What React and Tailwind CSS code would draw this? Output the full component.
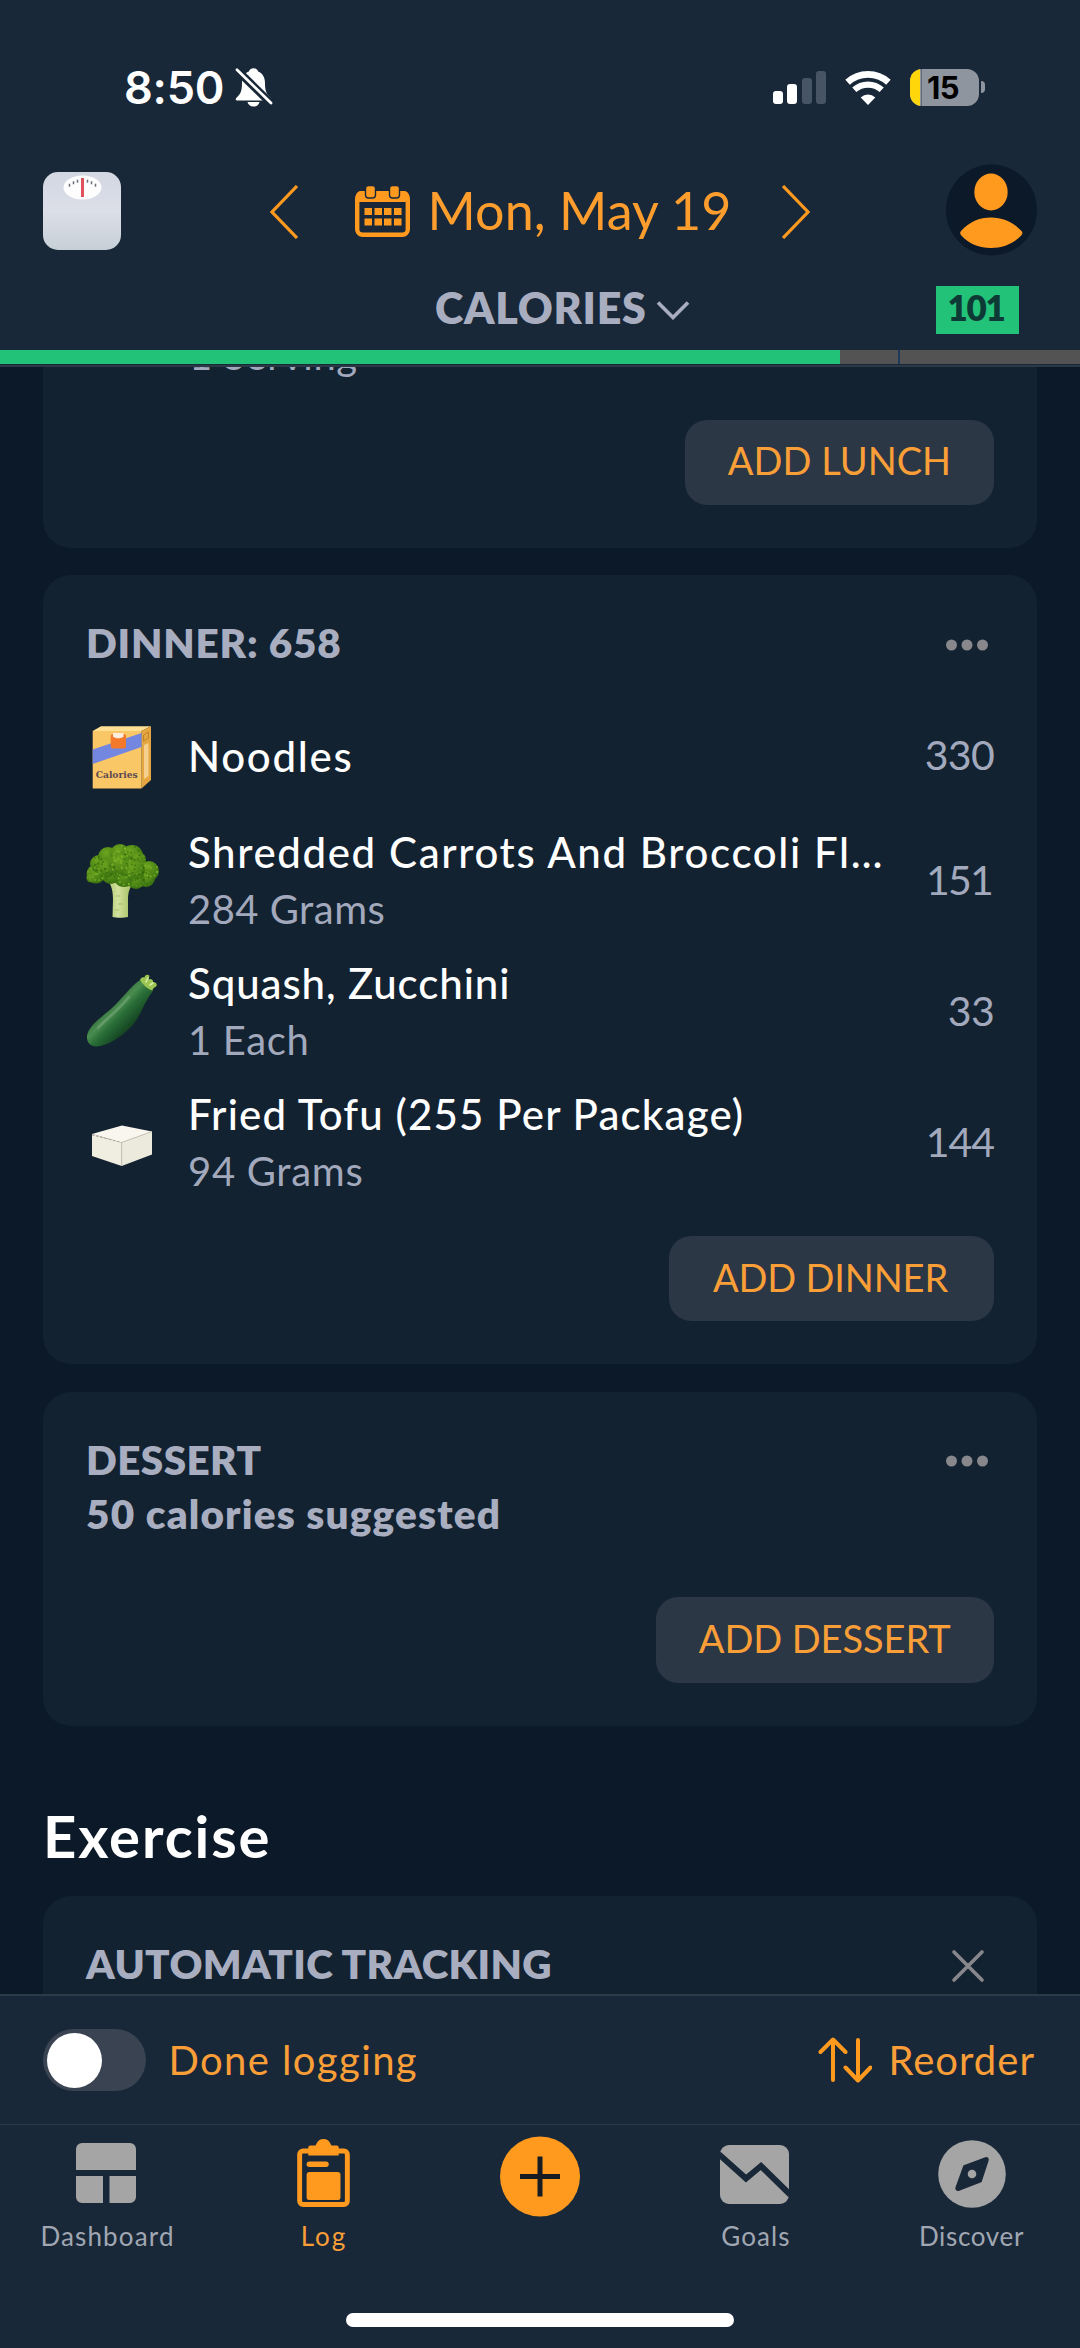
const ORANGE = '#ff9a1f';

function BellOff() {
  return (
    <svg className="ml-[11px] h-[40px] w-[38px]" viewBox="0 0 38 40" fill="#fff">
      <path d="M18.5 1.2c-2.4 0-4.2 1.4-4.6 3.2C9.200 6.200 7 10.500 7 16c0 8-1.600 11.200-5 14.200-2.200 2-1.400 3.300.8 3.300h31.400c2.200 0 3-1.300.8-3.300-3.400-3-5-6.200-5-14.200 0-5.500-2.200-9.800-6.900-11.600-.4-1.800-2.200-3.200-4.600-3.200z" />
      <path d="M12.500 35h12c-.5 2.700-2.900 4.600-6 4.600s-5.500-1.900-6-4.600z" />
      <path d="M2.500 3.500 36.500 37" stroke="#192838" strokeWidth="8" />
      <path d="M2 2.800 36 36" stroke="#fff" strokeWidth="2.800" strokeLinecap="round" />
    </svg>
  );
}

function StatusBar() {
  return (
    <div className="mt-[59px] flex h-[56px] items-center pl-[124px] pr-[95px]">
      <span className="mt-[2px] font-[Inter] text-[45px] font-semibold leading-[56px] tracking-[-0.200px] text-white">8:50</span>
      <BellOff />
      <div className="ml-auto flex items-center">
        <div className="flex h-[33px] items-end gap-[4.500px]">
          <div className="h-[13px] w-[10px] rounded-[3px] bg-white" />
          <div className="h-[19.500px] w-[10px] rounded-[3px] bg-white" />
          <div className="h-[26px] w-[10px] rounded-[3px] bg-[#475463]" />
          <div className="h-[33px] w-[10px] rounded-[3px] bg-[#475463]" />
        </div>
        <svg className="ml-[19px] h-[35px] w-[46px]" viewBox="0 0 46 35" fill="none" stroke="#fff">
          <path d="M2.600 12.300A30.500 30.500 0 0 1 43.400 12.300" strokeWidth="6.800" />
          <path d="M9.300 19.800A20.500 20.500 0 0 1 36.700 19.800" strokeWidth="6.200" />
          <path d="M23 35l-7.300-7.600a10.800 10.800 0 0 1 14.600 0z" fill="#fff" stroke="none" />
        </svg>
        <div className="ml-[19px] flex h-[37px] w-[69px] items-center overflow-hidden rounded-[12px] bg-[#8f959e]">
          <div className="h-full w-[10px] bg-[#fed60a]" />
          <div className="mx-px h-full w-px bg-[#192838]/40" />
          <span className="ml-[4px] font-[Inter] text-[31px] font-bold leading-none tracking-[-0.5px] text-black">15</span>
        </div>
        <div className="ml-[2px] h-[12px] w-[4px] rounded-r-full bg-[#8f959e]" />
      </div>
    </div>
  );
}

function ScaleIcon() {
  const ticks = [-13, -9, -5, 5, 9, 13];
  return (
    <svg className="mt-[2px] h-[78px] w-[78px]" viewBox="0 0 78 78">
      <defs>
        <linearGradient id="scaleBody" x1="0" y1="0" x2="0" y2="1">
          <stop offset="0" stopColor="#d3d7e2" />
          <stop offset="0.5" stopColor="#dcdfe8" />
          <stop offset="1" stopColor="#c6cfd7" />
        </linearGradient>
      </defs>
      <rect width="78" height="78" rx="15" fill="url(#scaleBody)" />
      <ellipse cx="39.500" cy="15.500" rx="19" ry="12" fill="#fdfdfe" />
      {ticks.map((t) => (
        <path key={t} d={`M${39.500 + t} ${7 + t * t * 0.028}v3`} stroke="#6b6f7a" strokeWidth="1.500" />
      ))}
      <path d="M39.500 6v19" stroke="#e0525c" strokeWidth="3" />
    </svg>
  );
}

function CalendarIcon() {
  return (
    <svg className="ml-[57px] mt-[2px] h-[52px] w-[55px]" viewBox="0 0 55 52">
      <rect x="2.200" y="8.200" width="50.600" height="41.600" rx="5.500" fill="none" stroke={ORANGE} strokeWidth="4.400" />
      <path d="M1 17V11a5 5 0 0 1 5-5h43a5 5 0 0 1 5 5v6z" fill={ORANGE} />
      {[15.500, 39.500].map((x) => (
        <rect key={x} x={x - 5} y="0.500" width="10" height="12.500" rx="3" fill={ORANGE} stroke="#192838" strokeWidth="1.400" />
      ))}
      {[23, 33.500].map((y) =>
        [9.500, 19.500, 29, 39].map((x) => <rect key={`${x}-${y}`} x={x} y={y} width="7.500" height="7" fill={ORANGE} />)
      )}
    </svg>
  );
}

function Header() {
  return (
    <header className="flex h-[367px] shrink-0 flex-col border-b-2 border-[#2b3947] bg-[#192838]">
      <StatusBar />
      <div className="mt-[49px] flex h-[92px] shrink-0 items-center pl-[43px] pr-[43px]">
        <ScaleIcon />
        <svg className="ml-[149px] mt-[4px] h-[54px] w-[28px]" viewBox="0 0 28 54" fill="none" stroke={ORANGE} strokeWidth="3.200">
          <path d="M27 1 2 27l25 26" />
        </svg>
        <CalendarIcon />
        <span className="ml-[17.500px] w-[304px] whitespace-nowrap text-[52px] leading-[60px] tracking-[0.090px] text-[#fc9d2e]">Mon, May 19</span>
        <svg className="ml-[50px] mt-[4px] h-[54px] w-[28px]" viewBox="0 0 28 54" fill="none" stroke={ORANGE} strokeWidth="3.200">
          <path d="m1 1 25 26L1 53" />
        </svg>
        <svg className="ml-auto h-[92px] w-[91px]" viewBox="0 0 91 92">
          <circle cx="45.500" cy="46" r="45.500" fill="#0c1929" />
          <ellipse cx="45" cy="28" rx="16.700" ry="18.500" fill={ORANGE} />
          <path d="M15.500 66.500C23 58 33.500 53.500 45 53.500S67 58 75 66.500c2 2 1.800 3.200.2 5C67 80 56.500 84 45 84s-22-4-29.700-12.500c-1.400-1.800-1.600-3 .2-5z" fill={ORANGE} />
        </svg>
      </div>
      <div className="mt-[29px] flex h-[49px] shrink-0 items-center pl-[435px] pr-[61px]">
        <span className="-mt-[3px] w-[211px] whitespace-nowrap text-[43px] font-extrabold leading-[48px] tracking-[0.750px] text-[#a8aec0]">CALORIES</span>
        <svg className="ml-[10px] h-[20px] w-[34px]" viewBox="0 0 34 20" fill="none" stroke="#a8aec0" strokeWidth="3.600">
          <path d="M2 2.500 17 17.500 32 2.500" />
        </svg>
        <span className="ml-auto flex h-[48px] w-[83px] items-center justify-center bg-[#22c278] pb-[4px] pr-[3px] text-[35px] font-extrabold leading-none tracking-[-1.300px] text-[#0e3a36]">101</span>
      </div>
      <div className="mt-[16px] flex h-[14px] shrink-0">
        <div className="w-[840px] bg-[#22c278]" />
        <div className="w-[58px] bg-[#545353]" />
        <div className="w-[2px] bg-[#1d3a5c]" />
        <div className="grow bg-[#545353]" />
      </div>
    </header>
  );
}

function NoodlesIcon() {
  return (
    <svg className="h-[74px] w-[74px]" viewBox="0 0 74 74">
      <path d="M6.700 13 15 8.300h50L55.500 13z" fill="#ffdf93" />
      <path d="M55.500 13 65 8.300V62l-9.500 8.500z" fill="#e5a541" />
      <path d="M58 27l4.500-2v33L58 61z" fill="#f5cf8d" />
      <path d="M57.500 17l5-3v6l-5 3z" fill="none" stroke="#c08526" strokeWidth="1" />
      <path d="M6.700 13h48.800v57.500H6.700z" fill="#fac767" />
      <path d="M6.700 31.500 55.500 15v14L6.700 46z" fill="#7487e0" />
      <rect x="24.700" y="16" width="15.300" height="14.500" rx="2.500" fill="#f4792a" />
      <path d="M27 15h10.500v3.200c-2 2.700-8.500 2.700-10.500 0z" fill="#fdeee0" />
      <text x="9.700" y="59.500" textLength="42" lengthAdjust="spacingAndGlyphs" fontFamily="DejaVu Serif, serif" fontWeight="700" fontSize="9.600" fill="#5b4a50">Calories</text>
    </svg>
  );
}

const FLORETS = [
  [10, 30, 9.500], [13, 20, 9], [22, 13, 10], [34, 10, 10], [46, 12, 11], [52, 16, 8], [63, 27, 10], [60, 34, 9],
  [50, 36, 9], [38, 32, 11], [25, 30, 10], [20, 24, 10], [35, 20, 12], [48, 26, 11], [5, 34, 4.500],
];
const SPECKS = Array.from({ length: 190 }, (_, i) => {
  const [cx, cy, r] = FLORETS[i % FLORETS.length];
  const a = i * 2.399;
  const d = r * 0.9 * Math.sqrt(((i * 37) % 100) / 100);
  return [cx + Math.cos(a) * d, cy + Math.sin(a) * d, i % 3];
});

function BroccoliIcon() {
  return (
    <svg className="mt-[3px] h-[74px] w-[74px]" viewBox="0 0 74 74">
      <defs>
        <linearGradient id="stalk" x1="0" y1="0" x2="1" y2="0">
          <stop offset="0" stopColor="#a9c468" />
          <stop offset="0.4" stopColor="#d3e29d" />
          <stop offset="1" stopColor="#9db95a" />
        </linearGradient>
        <radialGradient id="floret" cx="0.400" cy="0.300" r="0.700">
          <stop offset="0" stopColor="#6da51f" />
          <stop offset="1" stopColor="#3b7410" />
        </radialGradient>
      </defs>
      <path d="M21 36c5 5 6 12 6 20l-.5 17c4 1 11 1 15.500 0V56c0-8 1.500-12 6-18z" fill="url(#stalk)" />
      <path d="M30 52h4M32 60h5M29 66h4" stroke="#a8bf6c" strokeWidth="1" />
      {FLORETS.map(([cx, cy, r]) => (
        <circle key={`${cx}-${cy}`} cx={cx} cy={cy} r={r} fill="url(#floret)" />
      ))}
      {SPECKS.map(([x, y, k], i) => (
        <circle key={i} cx={x} cy={y} r="1" fill={k === 0 ? '#85bb2d' : k === 1 ? '#33680c' : '#649d1c'} opacity="0.7" />
      ))}
    </svg>
  );
}

function ZucchiniIcon() {
  return (
    <svg className="mt-[2px] h-[74px] w-[74px]" viewBox="0 0 74 74">
      <defs>
        <linearGradient id="zucchini" x1="0.300" y1="0.300" x2="0.700" y2="0.700">
          <stop offset="0" stopColor="#1f5f2f" />
          <stop offset="0.350" stopColor="#4b8d50" />
          <stop offset="0.550" stopColor="#2a6f38" />
          <stop offset="1" stopColor="#123f1f" />
        </linearGradient>
      </defs>
      <path d="M54 6C44 13 36 25 25 35 13 45 2 53 1 62c-.5 7 4 11 10 10.500 12-1 25-10 35-20.500 9-10 12-24 21-35z" fill="url(#zucchini)" />
      <path d="M54 6c1-2.500 3-3 4.500-2.500 0-2.500 3.500-4 5-1.500l-1 3.500c2-1.500 5 0 4.500 2.500 2.500 0 4.500 1.500 3.500 4-1 1.500-3 1-4 4.500-4-1-9-5-12.500-10.500z" fill="#9cc652" />
      <path d="M60 8l2-4M64 11l3-2" stroke="#dcebaa" strokeWidth="1.600" strokeLinecap="round" />
      <path d="M12 54c8-9 20-17 31-31" stroke="#86b284" strokeWidth="2.500" opacity="0.450" fill="none" strokeLinecap="round" />
    </svg>
  );
}

function TofuIcon() {
  return (
    <svg className="h-[74px] w-[74px]" viewBox="0 0 74 74">
      <path d="M6 30 36 21.500 66 27.500 35.700 38.500z" fill="#f8f6ee" />
      <path d="M6 30 35.700 38.500V62L6 52z" fill="#f0ede1" />
      <path d="M66 27.500 35.700 38.500V62L66 50.500z" fill="#ece9dd" />
      <path d="M6 31 35.700 38.500" stroke="#a8a496" strokeWidth="1" strokeDasharray="2.500 1.800" fill="none" />
      <path d="M35.700 38.500 66 27.500M35.700 38.500V62" stroke="#c8c4b6" strokeWidth="0.800" fill="none" />
    </svg>
  );
}

function Dots() {
  return (
    <svg className="mr-[5px] mt-[3px] h-[12px] w-[44px]" viewBox="0 0 44 12" fill="#87878c">
      <circle cx="6.500" cy="6" r="5.500" />
      <circle cx="22" cy="6" r="5.500" />
      <circle cx="37.500" cy="6" r="5.500" />
    </svg>
  );
}

function AddButton({ width, spacing, children }) {
  return (
    <button className={`flex h-[85.500px] items-center justify-center self-end rounded-[22px] bg-[#2b3745] pb-[4px] text-[38px] leading-none text-[#fa9f38] ${width} ${spacing}`}>
      {children}
    </button>
  );
}

const ITEMS = [
  { name: 'Noodles', nameSpacing: 'tracking-[1.700px]', kcal: '330', kcalSpacing: 'tracking-[-0.700px]', Icon: NoodlesIcon, height: 'h-[119.500px]' },
  { name: 'Shredded Carrots And Broccoli Fl…', nameSpacing: 'tracking-[1.620px]', amount: '284 Grams', amountSpacing: 'tracking-[0.470px]', kcal: '151', kcalSpacing: 'tracking-[-1.800px] pr-[2px]', Icon: BroccoliIcon, height: 'h-[130.660px]' },
  { name: 'Squash, Zucchini', nameSpacing: 'tracking-[0.900px]', amount: '1 Each', amountSpacing: 'tracking-[0.640px]', kcal: '33', kcalSpacing: 'tracking-[-0.700px]', Icon: ZucchiniIcon, height: 'h-[130.660px]' },
  { name: 'Fried Tofu (255 Per Package)', nameSpacing: 'tracking-[1.150px]', amount: '94 Grams', amountSpacing: 'tracking-[0.700px]', kcal: '144', kcalSpacing: 'tracking-[-1px]', Icon: TofuIcon, height: 'h-[130.660px]' },
];

function FoodRow({ name, nameSpacing, amount, amountSpacing, kcal, kcalSpacing, Icon, height }) {
  return (
    <div className={`flex items-center ${height}`}>
      <Icon />
      <div className="ml-[28px] flex flex-col whitespace-nowrap pt-[3px]">
        <span className={`text-[42px] font-medium leading-[57px] text-white ${nameSpacing}`}>{name}</span>
        {amount && <span className={`text-[40px] leading-[57px] text-[#a2a9bc] ${amountSpacing}`}>{amount}</span>}
      </div>
      <span className={`ml-auto mt-[1px] text-[41px] leading-[50px] text-[#a2a9bc] ${kcalSpacing}`}>{kcal}</span>
    </div>
  );
}

const TITLE = 'text-[40.500px] font-extrabold leading-[50px] text-[#a8aec0]';

function Log() {
  return (
    <main className="flex h-[1627px] shrink-0 flex-col overflow-hidden px-[43px]">
      <section className="flex h-[180.500px] shrink-0 flex-col rounded-b-[28px] bg-[#132231] px-[43px]">
        <span className="-mt-[36.500px] ml-[103px] text-[40px] leading-[48px] tracking-[0.500px] text-[#a2a9bc]">1 Serving</span>
        <div className="mt-[41px] flex flex-col">
          <AddButton width="w-[309px]" spacing="tracking-[0.020px]">ADD LUNCH</AddButton>
        </div>
      </section>

      <section className="mt-[27px] flex h-[789.500px] shrink-0 flex-col rounded-[28px] bg-[#132231] px-[43px] pt-[43.500px]">
        <div className="flex items-center justify-between">
          <h2 className={`${TITLE} tracking-[0.800px]`}>DINNER: 658</h2>
          <Dots />
        </div>
        <div className="mt-[27px]">
          {ITEMS.map((item) => (
            <FoodRow key={item.name} {...item} />
          ))}
        </div>
        <div className="mt-[29.500px] flex flex-col">
          <AddButton width="w-[325px]" spacing="tracking-[-0.140px] pr-[2px]">ADD DINNER</AddButton>
        </div>
      </section>

      <section className="mt-[28px] flex h-[334px] shrink-0 flex-col rounded-[28px] bg-[#132231] px-[43px] pt-[42.500px]">
        <div className="flex items-center justify-between">
          <h2 className={`${TITLE} tracking-[0.400px]`}>DESSERT</h2>
          <Dots />
        </div>
        <span className="mt-[1px] text-[40.500px] font-extrabold leading-[55px] tracking-[1.150px] text-[#a8aec0]">50 calories suggested</span>
        <div className="mt-[56.500px] flex flex-col">
          <AddButton width="w-[338.500px]" spacing="tracking-[-0.070px]">ADD DESSERT</AddButton>
        </div>
      </section>

      <h1 className="mt-[75px] text-[58px] font-bold leading-[70px] tracking-[1.900px] text-white">Exercise</h1>

      <section className="mt-[24.500px] flex h-[200px] shrink-0 flex-col rounded-t-[28px] bg-[#132231] px-[43px] pt-[43.500px]">
        <div className="flex items-center justify-between">
          <h2 className={`${TITLE} tracking-[0.350px]`}>AUTOMATIC TRACKING</h2>
          <svg className="mr-[9px] mt-[3px] h-[34px] w-[34px]" viewBox="0 0 34 34" stroke="#87878c" strokeWidth="3.600" strokeLinecap="round">
            <path d="M3 3l28 28M31 3 3 31" />
          </svg>
        </div>
      </section>
    </main>
  );
}

function ActionBar() {
  return (
    <div className="flex h-[130px] shrink-0 items-center border-t-2 border-[#2d3a48] bg-[#192838] pl-[43px] pr-[45px] text-[40px] text-[#fa9f38]">
      <div className="flex h-[62px] w-[103px] items-center rounded-full bg-[#3a4351] pl-[3.500px]">
        <div className="h-[55px] w-[55px] rounded-full bg-white" />
      </div>
      <span className="-mt-[1px] ml-[22.500px] leading-[50px] tracking-[1.400px]">Done logging</span>
      <svg className="ml-auto h-[46px] w-[54px]" viewBox="0 0 54 46" fill="none" stroke={ORANGE} strokeWidth="4" strokeLinecap="round" strokeLinejoin="round">
        <path d="M15 43V3M2.500 15 15 2.500 27.500 15M40 3v40M27.500 30.500 40 43.500 52.500 30.500" />
      </svg>
      <span className="-mt-[1px] ml-[16px] leading-[50px] tracking-[1.020px]">Reorder</span>
    </div>
  );
}

function DashboardIcon() {
  return (
    <svg className="-ml-[4px] -mt-[2px] h-[60px] w-[60px]" viewBox="0 0 60 60" fill="#a5a5a5">
      <path d="M0 27V6a6 6 0 0 1 6-6h48a6 6 0 0 1 6 6v21zM0 33h27v27H6a6 6 0 0 1-6-6zM33.500 33H60v21a6 6 0 0 1-6 6H33.500z" />
    </svg>
  );
}

function LogIcon() {
  return (
    <svg className="-ml-[2px] -mt-[2px] h-[70px] w-[53px]" viewBox="0 0 54 70" preserveAspectRatio="none" fill={ORANGE}>
      <rect x="2.700" y="13" width="48.600" height="53.500" rx="3.500" fill="none" stroke={ORANGE} strokeWidth="5" />
      <path d="M11.500 17.500V9.500a2 2 0 0 1 2-2h5C20 7.500 20 1 27 1s7 6.500 8.500 6.500h5a2 2 0 0 1 2 2v8z" />
      <rect x="9.800" y="23.500" width="22.500" height="5.500" rx="2.700" />
      <rect x="9.800" y="34" width="34.500" height="28" rx="2.500" />
    </svg>
  );
}

function GoalsIcon() {
  return (
    <svg className="-ml-[3px] h-[59px] w-[69px]" viewBox="0 0 69 59">
      <defs>
        <clipPath id="goalsFrame"><rect width="69" height="59" rx="9" /></clipPath>
      </defs>
      <g clipPath="url(#goalsFrame)">
        <rect width="69" height="59" fill="#a5a5a5" />
        <path d="M-3 7.500 26 33.500 41 21 72 51.500" fill="none" stroke="#192838" strokeWidth="6" />
      </g>
    </svg>
  );
}

function DiscoverIcon() {
  return (
    <svg className="-ml-[1px] h-[68px] w-[68px]" viewBox="0 0 68 68">
      <circle cx="34" cy="34" r="33.800" fill="#a5a5a5" />
      <path d="M26 26 47.500 18c1.800-.6 3 .6 2.400 2.400L43 41.500 21 50c-2 .7-3.400-.6-2.800-2.400z" fill="#192838" stroke="#192838" strokeWidth="1.500" strokeLinejoin="round" />
      <circle cx="34" cy="34" r="4.300" fill="#a5a5a5" />
    </svg>
  );
}

function Tab({ Icon, label, color, spacing }) {
  return (
    <div className="flex flex-col items-center">
      <div className="flex h-[80px] items-center justify-center pb-[4px]"><Icon /></div>
      <span className={`mt-[3px] text-[26px] leading-[34px] ${color} ${spacing}`}>{label}</span>
    </div>
  );
}

function TabBar() {
  return (
    <nav className="flex h-[224px] shrink-0 flex-col items-center border-t-[1.500px] border-[#2d3a48] bg-[#192838]">
      <div className="mt-[11px] grid w-full grid-cols-5">
        <Tab Icon={DashboardIcon} label="Dashboard" color="text-[#a0a7b2]" spacing="tracking-[1.150px] -ml-[1px]" />
        <Tab Icon={LogIcon} label="Log" color="text-[#fa9f38]" spacing="tracking-[2px]" />
        <svg className="mx-auto h-[81px] w-[81px]" viewBox="0 0 81 81">
          <circle cx="40" cy="40.500" r="40" fill={ORANGE} />
          <path d="M40 20.500v40M20 40.500h40" stroke="#161c22" strokeWidth="5" />
        </svg>
        <Tab Icon={GoalsIcon} label="Goals" color="text-[#a0a7b2]" spacing="tracking-[1.090px]" />
        <Tab Icon={DiscoverIcon} label="Discover" color="text-[#a0a7b2]" spacing="tracking-[0.660px] -ml-[1px]" />
      </div>
      <div className="mb-[21px] mt-auto h-[14.500px] w-[388px] rounded-full bg-white" />
    </nav>
  );
}

export default function App() {
  return (
    <div className="flex h-[2348px] w-[1080px] flex-col overflow-hidden bg-[#0c1929] font-[Lato,sans-serif]">
      <Header />
      <Log />
      <ActionBar />
      <TabBar />
    </div>
  );
}
